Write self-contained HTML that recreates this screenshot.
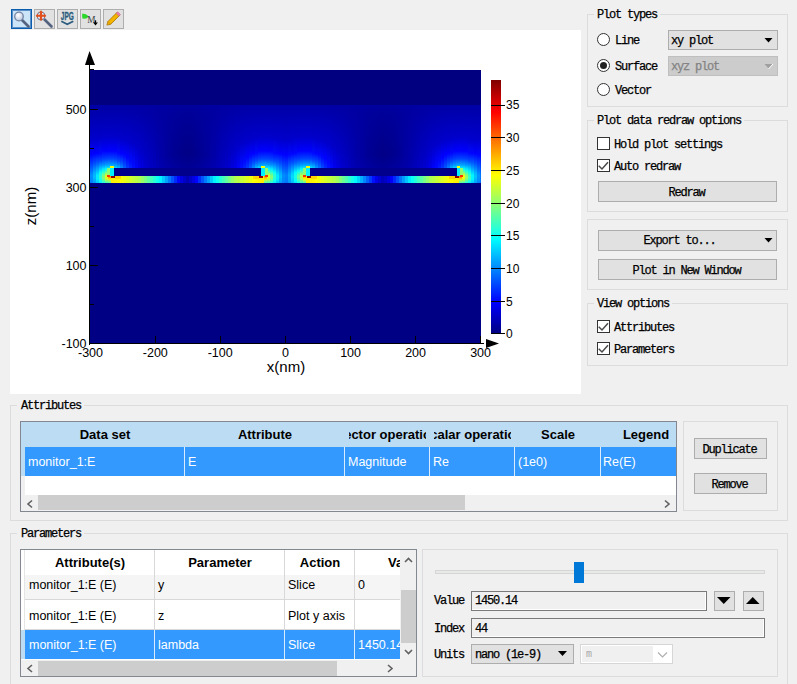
<!DOCTYPE html>
<html><head><meta charset="utf-8">
<style>
*{box-sizing:border-box;margin:0;padding:0}
html,body{width:797px;height:684px;overflow:hidden;background:#f0f0f0}
body{position:relative;font-family:"Liberation Sans",sans-serif;color:#000}
.a{position:absolute}
.mono{position:absolute;font-family:"Liberation Mono",monospace;font-size:12px;letter-spacing:-1.2px;-webkit-text-stroke:0.25px currentColor;white-space:pre;line-height:14px}
.tb{position:absolute;top:9px;width:21px;height:20px;border:1px solid #adadad;background:#e1e1e1}
.gb{position:absolute;border:1px solid #dcdcdc}
.gt{background:#f0f0f0;padding:0 3px}
.btn{position:absolute;border:1px solid #adadad;background:#e1e1e1}
.radio{position:absolute;width:13px;height:13px;border-radius:50%;border:1px solid #333;background:#fff}
.chk{position:absolute;width:13px;height:13px;border:1px solid #333;background:#fff}
.s{position:absolute;font-size:12.5px;white-space:pre;line-height:14px}
.hb{position:absolute;font-size:13px;font-weight:bold;white-space:pre;line-height:14px}
svg{position:absolute;left:0;top:0;overflow:visible}
</style></head><body>

<!-- toolbar -->
<div class="tb" style="left:11px;border:1px solid #0a5cae;box-shadow:inset 0 0 0 1px #5b8fc8;background:#cce4f7"></div>
<div class="tb" style="left:34px"></div>
<div class="tb" style="left:57px"></div>
<div class="tb" style="left:80px"></div>
<div class="tb" style="left:103px"></div>
<svg width="797" height="40" viewBox="0 0 797 40">
 <defs><radialGradient id="lens" cx="0.4" cy="0.35" r="0.7"><stop offset="0" stop-color="#ffffff"/><stop offset="1" stop-color="#b8c4dc"/></radialGradient></defs>
 <!-- magnifier -->
 <line x1="22" y1="20" x2="28.5" y2="26.5" stroke="#53627f" stroke-width="2.6" stroke-linecap="round"/>
 <circle cx="19" cy="16.5" r="4.3" fill="url(#lens)" stroke="#7584a3" stroke-width="1.3"/>
 <!-- zoom with red cross -->
 <line x1="44.5" y1="19.5" x2="51.5" y2="26.5" stroke="#53627f" stroke-width="2.6" stroke-linecap="round"/>
 <circle cx="41" cy="16" r="4" fill="#dfe4ee" stroke="#7584a3" stroke-width="1"/>
 <circle cx="41" cy="16" r="4" fill="none" stroke="#7d8fb3" stroke-width="1" stroke-dasharray="1.2 1"/>
 <path d="M41 10.3l2.2 2.4h-1.2v2h2v-1.2l2.3 2.2-2.3 2.2v-1.2h-2v2h1.2l-2.2 2.4-2.2-2.4h1.2v-2h-2v1.2l-2.3-2.2 2.3-2.2v1.2h2v-2h-1.2z" fill="#e2501e"/>
 <circle cx="41" cy="15.7" r="1.6" fill="#e2501e"/>
 <!-- JPG -->
 <text x="67.3" y="20.3" font-size="10.5" font-weight="bold" fill="#2b5c7e" stroke="#2b5c7e" stroke-width="0.35" text-anchor="middle" font-family="Liberation Sans" textLength="13" lengthAdjust="spacingAndGlyphs">JPG</text>
 <path d="M61.3 21.2l6 3 6-3" fill="none" stroke="#2b5c7e" stroke-width="1.7"/>
 <!-- M down arrow -->
 <path d="M82.3 13.6l3.6 0.7 3 2.1-2.6 2.2-3.7 0.1-0.5-2.4z" fill="#2ad82a"/>
 <text x="87.2" y="23.4" font-size="9.3" fill="#404040" font-family="Liberation Serif">M</text>
 <path d="M95.5 20.3v2.6" stroke="#000" stroke-width="1.3"/>
 <path d="M93.1 22.4h4.8l-2.4 3.2z" fill="#000"/>
 <!-- pencil -->
 <path d="M106.9 25.1l1-3.6 8.9-8.9 2.8 2.8-8.9 8.9z" fill="#f2b400" stroke="#a87400" stroke-width="0.8"/>
 <path d="M107.9 21.5l2.8 2.8" stroke="#c88a00" stroke-width="0.8"/>
 <path d="M116.1 13.3l1.6-1.6 2.8 2.8-1.6 1.6z" fill="#e77fae" stroke="#c0608a" stroke-width="0.5"/>
</svg>

<!-- plot area -->
<div class="a" style="left:10px;top:30px;width:571px;height:364px;background:#fff"></div>
<svg width="797" height="400" viewBox="0 0 797 400" font-family="Liberation Sans">
<defs><linearGradient id="c0" x2="0" y2="1"><stop offset="0.00" stop-color="#0000a6"/><stop offset="0.44" stop-color="#0000ca"/><stop offset="0.64" stop-color="#0003ff"/><stop offset="0.90" stop-color="#008dff"/><stop offset="0.97" stop-color="#0085ff"/><stop offset="1.00" stop-color="#0079ff"/></linearGradient><linearGradient id="c1" x2="0" y2="1"><stop offset="0.00" stop-color="#0000a6"/><stop offset="0.44" stop-color="#0000cc"/><stop offset="0.62" stop-color="#0000fe"/><stop offset="0.74" stop-color="#0048ff"/><stop offset="0.87" stop-color="#00acff"/><stop offset="0.92" stop-color="#00bcff"/><stop offset="1.00" stop-color="#009bff"/></linearGradient><linearGradient id="c2" x2="0" y2="1"><stop offset="0.00" stop-color="#0000a6"/><stop offset="0.44" stop-color="#0000cd"/><stop offset="0.62" stop-color="#0003ff"/><stop offset="0.74" stop-color="#0057ff"/><stop offset="0.90" stop-color="#00ebff"/><stop offset="0.95" stop-color="#00ebff"/><stop offset="1.00" stop-color="#00c1ff"/></linearGradient><linearGradient id="c3" x2="0" y2="1"><stop offset="0.00" stop-color="#0000a6"/><stop offset="0.41" stop-color="#0000c9"/><stop offset="0.62" stop-color="#0007ff"/><stop offset="0.72" stop-color="#004dff"/><stop offset="0.79" stop-color="#00a3ff"/><stop offset="0.85" stop-color="#00ecff"/><stop offset="0.87" stop-color="#11ffee"/><stop offset="0.92" stop-color="#35ffca"/><stop offset="0.97" stop-color="#11ffee"/><stop offset="1.00" stop-color="#00ecff"/></linearGradient><linearGradient id="c4" x2="0" y2="1"><stop offset="0.00" stop-color="#0000a6"/><stop offset="0.41" stop-color="#0000ca"/><stop offset="0.59" stop-color="#0000fd"/><stop offset="0.69" stop-color="#003eff"/><stop offset="0.77" stop-color="#0093ff"/><stop offset="0.82" stop-color="#00e7ff"/><stop offset="0.85" stop-color="#19ffe6"/><stop offset="0.90" stop-color="#76ff89"/><stop offset="0.92" stop-color="#88ff77"/><stop offset="0.95" stop-color="#76ff89"/><stop offset="1.00" stop-color="#19ffe6"/></linearGradient><linearGradient id="c5" x2="0" y2="1"><stop offset="0.00" stop-color="#0000a6"/><stop offset="0.41" stop-color="#0000ca"/><stop offset="0.59" stop-color="#0000ff"/><stop offset="0.69" stop-color="#0043ff"/><stop offset="0.77" stop-color="#009fff"/><stop offset="0.82" stop-color="#01fffe"/><stop offset="0.90" stop-color="#ccff33"/><stop offset="0.92" stop-color="#efff10"/><stop offset="0.95" stop-color="#ccff33"/><stop offset="1.00" stop-color="#40ffbf"/></linearGradient><linearGradient id="c6" x2="0" y2="1"><stop offset="0.00" stop-color="#0000a6"/><stop offset="0.41" stop-color="#0000cb"/><stop offset="0.59" stop-color="#0001ff"/><stop offset="0.69" stop-color="#0045ff"/><stop offset="0.77" stop-color="#00a6ff"/><stop offset="0.82" stop-color="#0ffff0"/><stop offset="0.85" stop-color="#55ffaa"/><stop offset="0.87" stop-color="#acff53"/><stop offset="0.90" stop-color="#ffea00"/><stop offset="0.92" stop-color="#ff8d00"/><stop offset="0.95" stop-color="#ffea00"/><stop offset="0.97" stop-color="#acff53"/><stop offset="1.00" stop-color="#55ffaa"/></linearGradient><linearGradient id="c7" x2="0" y2="1"><stop offset="0.00" stop-color="#0000a6"/><stop offset="0.41" stop-color="#0000ca"/><stop offset="0.59" stop-color="#0000ff"/><stop offset="0.69" stop-color="#0045ff"/><stop offset="0.77" stop-color="#00a4ff"/><stop offset="0.82" stop-color="#0bfff4"/><stop offset="0.87" stop-color="#a2ff5d"/><stop offset="0.90" stop-color="#ffff00"/><stop offset="0.92" stop-color="#ffc100"/><stop offset="0.95" stop-color="#ffff00"/><stop offset="1.00" stop-color="#50ffaf"/></linearGradient><linearGradient id="c8" x2="0" y2="1"><stop offset="0.00" stop-color="#0000a6"/><stop offset="0.41" stop-color="#0000ca"/><stop offset="0.59" stop-color="#0000fe"/><stop offset="0.69" stop-color="#0040ff"/><stop offset="0.77" stop-color="#0099ff"/><stop offset="0.82" stop-color="#00f2ff"/><stop offset="0.87" stop-color="#66ff99"/><stop offset="0.90" stop-color="#9aff65"/><stop offset="0.92" stop-color="#b1ff4e"/><stop offset="0.95" stop-color="#9aff65"/><stop offset="1.00" stop-color="#2bffd4"/></linearGradient><linearGradient id="c9" x2="0" y2="1"><stop offset="0.00" stop-color="#0000a6"/><stop offset="0.41" stop-color="#0000c9"/><stop offset="0.62" stop-color="#0007ff"/><stop offset="0.72" stop-color="#004dff"/><stop offset="0.82" stop-color="#00c8ff"/><stop offset="0.85" stop-color="#00eeff"/><stop offset="0.87" stop-color="#13ffec"/><stop offset="0.90" stop-color="#2effd1"/><stop offset="0.92" stop-color="#38ffc7"/><stop offset="0.95" stop-color="#2effd1"/><stop offset="0.97" stop-color="#13ffec"/><stop offset="1.00" stop-color="#00eeff"/></linearGradient><linearGradient id="c10" x2="0" y2="1"><stop offset="0.00" stop-color="#0000a6"/><stop offset="0.44" stop-color="#0000cc"/><stop offset="0.62" stop-color="#0000ff"/><stop offset="0.74" stop-color="#004fff"/><stop offset="0.87" stop-color="#00c1ff"/><stop offset="0.92" stop-color="#00d4ff"/><stop offset="1.00" stop-color="#00adff"/></linearGradient><linearGradient id="c11" x2="0" y2="1"><stop offset="0.00" stop-color="#0000a6"/><stop offset="0.44" stop-color="#0000c9"/><stop offset="0.64" stop-color="#0003ff"/><stop offset="0.90" stop-color="#008eff"/><stop offset="0.97" stop-color="#0086ff"/><stop offset="1.00" stop-color="#007aff"/></linearGradient><linearGradient id="c12" x2="0" y2="1"><stop offset="0.00" stop-color="#0000a5"/><stop offset="0.46" stop-color="#0000cb"/><stop offset="0.67" stop-color="#0003ff"/><stop offset="0.90" stop-color="#0060ff"/><stop offset="1.00" stop-color="#0053ff"/></linearGradient><linearGradient id="c13" x2="0" y2="1"><stop offset="0.00" stop-color="#0000a5"/><stop offset="0.49" stop-color="#0000cc"/><stop offset="0.72" stop-color="#0009ff"/><stop offset="0.90" stop-color="#003dff"/><stop offset="1.00" stop-color="#0034ff"/></linearGradient><linearGradient id="c14" x2="0" y2="1"><stop offset="0.00" stop-color="#0000a5"/><stop offset="0.49" stop-color="#0000c8"/><stop offset="0.77" stop-color="#0009ff"/><stop offset="0.92" stop-color="#0022ff"/><stop offset="1.00" stop-color="#001bff"/></linearGradient><linearGradient id="c15" x2="0" y2="1"><stop offset="0.00" stop-color="#0000a4"/><stop offset="0.51" stop-color="#0000c7"/><stop offset="0.85" stop-color="#0006ff"/><stop offset="1.00" stop-color="#0007ff"/></linearGradient><linearGradient id="c16" x2="0" y2="1"><stop offset="0.00" stop-color="#0000a4"/><stop offset="0.56" stop-color="#0000c9"/><stop offset="0.92" stop-color="#0000f9"/><stop offset="1.00" stop-color="#0000f6"/></linearGradient><linearGradient id="c17" x2="0" y2="1"><stop offset="0.00" stop-color="#0000a3"/><stop offset="0.59" stop-color="#0000c6"/><stop offset="0.95" stop-color="#0000eb"/><stop offset="1.00" stop-color="#0000e9"/></linearGradient><linearGradient id="c18" x2="0" y2="1"><stop offset="0.00" stop-color="#0000a3"/><stop offset="0.62" stop-color="#0000c3"/><stop offset="0.97" stop-color="#0000df"/><stop offset="1.00" stop-color="#0000de"/></linearGradient><linearGradient id="c19" x2="0" y2="1"><stop offset="0.00" stop-color="#0000a2"/><stop offset="0.64" stop-color="#0000bf"/><stop offset="1.00" stop-color="#0000d5"/></linearGradient><linearGradient id="c20" x2="0" y2="1"><stop offset="0.00" stop-color="#0000a2"/><stop offset="0.69" stop-color="#0000bd"/><stop offset="1.00" stop-color="#0000cd"/></linearGradient><linearGradient id="c21" x2="0" y2="1"><stop offset="0.00" stop-color="#0000a1"/><stop offset="0.69" stop-color="#0000b7"/><stop offset="1.00" stop-color="#0000c7"/></linearGradient><linearGradient id="c22" x2="0" y2="1"><stop offset="0.00" stop-color="#0000a1"/><stop offset="0.67" stop-color="#0000af"/><stop offset="1.00" stop-color="#0000c1"/></linearGradient><linearGradient id="c23" x2="0" y2="1"><stop offset="0.00" stop-color="#0000a0"/><stop offset="0.67" stop-color="#0000a9"/><stop offset="1.00" stop-color="#0000bc"/></linearGradient><linearGradient id="c24" x2="0" y2="1"><stop offset="0.00" stop-color="#0000a0"/><stop offset="0.67" stop-color="#0000a4"/><stop offset="1.00" stop-color="#0000b8"/></linearGradient><linearGradient id="c25" x2="0" y2="1"><stop offset="0.00" stop-color="#0000a0"/><stop offset="0.64" stop-color="#00009d"/><stop offset="1.00" stop-color="#0000b4"/></linearGradient><linearGradient id="c26" x2="0" y2="1"><stop offset="0.00" stop-color="#00009f"/><stop offset="0.64" stop-color="#000099"/><stop offset="1.00" stop-color="#0000b1"/></linearGradient><linearGradient id="c27" x2="0" y2="1"><stop offset="0.00" stop-color="#00009f"/><stop offset="0.64" stop-color="#000095"/><stop offset="1.00" stop-color="#0000ae"/></linearGradient><linearGradient id="c28" x2="0" y2="1"><stop offset="0.00" stop-color="#00009e"/><stop offset="0.64" stop-color="#000091"/><stop offset="1.00" stop-color="#0000ab"/></linearGradient><linearGradient id="c29" x2="0" y2="1"><stop offset="0.00" stop-color="#00009e"/><stop offset="0.64" stop-color="#00008e"/><stop offset="1.00" stop-color="#0000a9"/></linearGradient><linearGradient id="c30" x2="0" y2="1"><stop offset="0.00" stop-color="#00009d"/><stop offset="0.62" stop-color="#00008a"/><stop offset="1.00" stop-color="#0000a7"/></linearGradient><linearGradient id="c31" x2="0" y2="1"><stop offset="0.00" stop-color="#00009d"/><stop offset="0.62" stop-color="#000088"/><stop offset="1.00" stop-color="#0000a5"/></linearGradient><linearGradient id="c32" x2="0" y2="1"><stop offset="0.00" stop-color="#00009d"/><stop offset="0.62" stop-color="#000087"/><stop offset="1.00" stop-color="#0000a4"/></linearGradient><linearGradient id="c33" x2="0" y2="1"><stop offset="0.00" stop-color="#00009d"/><stop offset="0.62" stop-color="#000088"/><stop offset="1.00" stop-color="#0000a5"/></linearGradient><linearGradient id="c34" x2="0" y2="1"><stop offset="0.00" stop-color="#00009d"/><stop offset="0.62" stop-color="#00008a"/><stop offset="1.00" stop-color="#0000a7"/></linearGradient><linearGradient id="c35" x2="0" y2="1"><stop offset="0.00" stop-color="#00009e"/><stop offset="0.64" stop-color="#00008e"/><stop offset="1.00" stop-color="#0000a9"/></linearGradient><linearGradient id="c36" x2="0" y2="1"><stop offset="0.00" stop-color="#00009e"/><stop offset="0.64" stop-color="#000091"/><stop offset="1.00" stop-color="#0000ab"/></linearGradient><linearGradient id="c37" x2="0" y2="1"><stop offset="0.00" stop-color="#00009f"/><stop offset="0.64" stop-color="#000095"/><stop offset="1.00" stop-color="#0000ae"/></linearGradient><linearGradient id="c38" x2="0" y2="1"><stop offset="0.00" stop-color="#00009f"/><stop offset="0.64" stop-color="#000099"/><stop offset="1.00" stop-color="#0000b1"/></linearGradient><linearGradient id="c39" x2="0" y2="1"><stop offset="0.00" stop-color="#0000a0"/><stop offset="0.64" stop-color="#00009d"/><stop offset="1.00" stop-color="#0000b4"/></linearGradient><linearGradient id="c40" x2="0" y2="1"><stop offset="0.00" stop-color="#0000a0"/><stop offset="0.67" stop-color="#0000a4"/><stop offset="1.00" stop-color="#0000b8"/></linearGradient><linearGradient id="c41" x2="0" y2="1"><stop offset="0.00" stop-color="#0000a0"/><stop offset="0.67" stop-color="#0000a9"/><stop offset="1.00" stop-color="#0000bc"/></linearGradient><linearGradient id="c42" x2="0" y2="1"><stop offset="0.00" stop-color="#0000a1"/><stop offset="0.67" stop-color="#0000af"/><stop offset="1.00" stop-color="#0000c1"/></linearGradient><linearGradient id="c43" x2="0" y2="1"><stop offset="0.00" stop-color="#0000a1"/><stop offset="0.69" stop-color="#0000b7"/><stop offset="1.00" stop-color="#0000c7"/></linearGradient><linearGradient id="c44" x2="0" y2="1"><stop offset="0.00" stop-color="#0000a2"/><stop offset="0.69" stop-color="#0000bd"/><stop offset="1.00" stop-color="#0000cd"/></linearGradient><linearGradient id="c45" x2="0" y2="1"><stop offset="0.00" stop-color="#0000a2"/><stop offset="0.64" stop-color="#0000bf"/><stop offset="1.00" stop-color="#0000d5"/></linearGradient><linearGradient id="c46" x2="0" y2="1"><stop offset="0.00" stop-color="#0000a3"/><stop offset="0.62" stop-color="#0000c3"/><stop offset="0.97" stop-color="#0000df"/><stop offset="1.00" stop-color="#0000de"/></linearGradient><linearGradient id="c47" x2="0" y2="1"><stop offset="0.00" stop-color="#0000a3"/><stop offset="0.59" stop-color="#0000c6"/><stop offset="0.95" stop-color="#0000eb"/><stop offset="1.00" stop-color="#0000e9"/></linearGradient><linearGradient id="c48" x2="0" y2="1"><stop offset="0.00" stop-color="#0000a4"/><stop offset="0.56" stop-color="#0000c9"/><stop offset="0.92" stop-color="#0000f9"/><stop offset="1.00" stop-color="#0000f6"/></linearGradient><linearGradient id="c49" x2="0" y2="1"><stop offset="0.00" stop-color="#0000a4"/><stop offset="0.51" stop-color="#0000c7"/><stop offset="0.85" stop-color="#0006ff"/><stop offset="1.00" stop-color="#0007ff"/></linearGradient><linearGradient id="c50" x2="0" y2="1"><stop offset="0.00" stop-color="#0000a5"/><stop offset="0.49" stop-color="#0000c8"/><stop offset="0.77" stop-color="#0009ff"/><stop offset="0.92" stop-color="#0022ff"/><stop offset="1.00" stop-color="#001bff"/></linearGradient><linearGradient id="c51" x2="0" y2="1"><stop offset="0.00" stop-color="#0000a5"/><stop offset="0.49" stop-color="#0000cc"/><stop offset="0.72" stop-color="#0009ff"/><stop offset="0.90" stop-color="#003dff"/><stop offset="1.00" stop-color="#0034ff"/></linearGradient><linearGradient id="c52" x2="0" y2="1"><stop offset="0.00" stop-color="#0000a5"/><stop offset="0.46" stop-color="#0000cb"/><stop offset="0.67" stop-color="#0003ff"/><stop offset="0.90" stop-color="#0060ff"/><stop offset="1.00" stop-color="#0053ff"/></linearGradient><linearGradient id="c53" x2="0" y2="1"><stop offset="0.00" stop-color="#0000a6"/><stop offset="0.44" stop-color="#0000c9"/><stop offset="0.64" stop-color="#0003ff"/><stop offset="0.90" stop-color="#008eff"/><stop offset="0.97" stop-color="#0086ff"/><stop offset="1.00" stop-color="#007aff"/></linearGradient><linearGradient id="c54" x2="0" y2="1"><stop offset="0.00" stop-color="#0000a6"/><stop offset="0.44" stop-color="#0000cc"/><stop offset="0.62" stop-color="#0000ff"/><stop offset="0.74" stop-color="#004fff"/><stop offset="0.87" stop-color="#00c1ff"/><stop offset="0.92" stop-color="#00d4ff"/><stop offset="1.00" stop-color="#00adff"/></linearGradient><linearGradient id="c55" x2="0" y2="1"><stop offset="0.00" stop-color="#0000a6"/><stop offset="0.41" stop-color="#0000c9"/><stop offset="0.62" stop-color="#0007ff"/><stop offset="0.72" stop-color="#004dff"/><stop offset="0.82" stop-color="#00c8ff"/><stop offset="0.85" stop-color="#00eeff"/><stop offset="0.87" stop-color="#13ffec"/><stop offset="0.90" stop-color="#2effd1"/><stop offset="0.92" stop-color="#38ffc7"/><stop offset="0.95" stop-color="#2effd1"/><stop offset="0.97" stop-color="#13ffec"/><stop offset="1.00" stop-color="#00eeff"/></linearGradient><linearGradient id="c56" x2="0" y2="1"><stop offset="0.00" stop-color="#0000a6"/><stop offset="0.41" stop-color="#0000ca"/><stop offset="0.59" stop-color="#0000fe"/><stop offset="0.69" stop-color="#0040ff"/><stop offset="0.77" stop-color="#0099ff"/><stop offset="0.82" stop-color="#00f2ff"/><stop offset="0.87" stop-color="#66ff99"/><stop offset="0.90" stop-color="#9aff65"/><stop offset="0.92" stop-color="#b1ff4e"/><stop offset="0.95" stop-color="#9aff65"/><stop offset="1.00" stop-color="#2bffd4"/></linearGradient><linearGradient id="c57" x2="0" y2="1"><stop offset="0.00" stop-color="#0000a6"/><stop offset="0.41" stop-color="#0000ca"/><stop offset="0.59" stop-color="#0000ff"/><stop offset="0.69" stop-color="#0045ff"/><stop offset="0.77" stop-color="#00a4ff"/><stop offset="0.82" stop-color="#0bfff4"/><stop offset="0.87" stop-color="#a2ff5d"/><stop offset="0.90" stop-color="#ffff00"/><stop offset="0.92" stop-color="#ffc100"/><stop offset="0.95" stop-color="#ffff00"/><stop offset="1.00" stop-color="#50ffaf"/></linearGradient><linearGradient id="c58" x2="0" y2="1"><stop offset="0.00" stop-color="#0000a6"/><stop offset="0.41" stop-color="#0000cb"/><stop offset="0.59" stop-color="#0001ff"/><stop offset="0.69" stop-color="#0045ff"/><stop offset="0.77" stop-color="#00a6ff"/><stop offset="0.82" stop-color="#0ffff0"/><stop offset="0.85" stop-color="#55ffaa"/><stop offset="0.87" stop-color="#acff53"/><stop offset="0.90" stop-color="#ffea00"/><stop offset="0.92" stop-color="#ff8d00"/><stop offset="0.95" stop-color="#ffea00"/><stop offset="0.97" stop-color="#acff53"/><stop offset="1.00" stop-color="#55ffaa"/></linearGradient><linearGradient id="c59" x2="0" y2="1"><stop offset="0.00" stop-color="#0000a6"/><stop offset="0.41" stop-color="#0000ca"/><stop offset="0.59" stop-color="#0000ff"/><stop offset="0.69" stop-color="#0043ff"/><stop offset="0.77" stop-color="#009fff"/><stop offset="0.82" stop-color="#01fffe"/><stop offset="0.90" stop-color="#ccff33"/><stop offset="0.92" stop-color="#efff10"/><stop offset="0.95" stop-color="#ccff33"/><stop offset="1.00" stop-color="#40ffbf"/></linearGradient><linearGradient id="c60" x2="0" y2="1"><stop offset="0.00" stop-color="#0000a6"/><stop offset="0.41" stop-color="#0000ca"/><stop offset="0.59" stop-color="#0000fd"/><stop offset="0.69" stop-color="#003eff"/><stop offset="0.77" stop-color="#0093ff"/><stop offset="0.82" stop-color="#00e7ff"/><stop offset="0.85" stop-color="#19ffe6"/><stop offset="0.90" stop-color="#76ff89"/><stop offset="0.92" stop-color="#88ff77"/><stop offset="0.95" stop-color="#76ff89"/><stop offset="1.00" stop-color="#19ffe6"/></linearGradient><linearGradient id="c61" x2="0" y2="1"><stop offset="0.00" stop-color="#0000a6"/><stop offset="0.41" stop-color="#0000c9"/><stop offset="0.62" stop-color="#0007ff"/><stop offset="0.72" stop-color="#004dff"/><stop offset="0.79" stop-color="#00a3ff"/><stop offset="0.85" stop-color="#00ecff"/><stop offset="0.87" stop-color="#11ffee"/><stop offset="0.92" stop-color="#35ffca"/><stop offset="0.97" stop-color="#11ffee"/><stop offset="1.00" stop-color="#00ecff"/></linearGradient><linearGradient id="c62" x2="0" y2="1"><stop offset="0.00" stop-color="#0000a6"/><stop offset="0.44" stop-color="#0000cd"/><stop offset="0.62" stop-color="#0003ff"/><stop offset="0.74" stop-color="#0057ff"/><stop offset="0.90" stop-color="#00ebff"/><stop offset="0.95" stop-color="#00ebff"/><stop offset="1.00" stop-color="#00c1ff"/></linearGradient><linearGradient id="c63" x2="0" y2="1"><stop offset="0.00" stop-color="#0000a6"/><stop offset="0.44" stop-color="#0000cc"/><stop offset="0.62" stop-color="#0000fe"/><stop offset="0.74" stop-color="#0048ff"/><stop offset="0.87" stop-color="#00acff"/><stop offset="0.92" stop-color="#00bcff"/><stop offset="1.00" stop-color="#009bff"/></linearGradient><linearGradient id="c64" x2="0" y2="1"><stop offset="0.00" stop-color="#0000a6"/><stop offset="0.44" stop-color="#0000ca"/><stop offset="0.64" stop-color="#0003ff"/><stop offset="0.90" stop-color="#008dff"/><stop offset="0.97" stop-color="#0085ff"/><stop offset="1.00" stop-color="#0079ff"/></linearGradient><linearGradient id="c65" x2="0" y2="1"><stop offset="0.00" stop-color="#0000a6"/><stop offset="0.44" stop-color="#0000ca"/><stop offset="0.64" stop-color="#0001ff"/><stop offset="0.90" stop-color="#0081ff"/><stop offset="0.97" stop-color="#0079ff"/><stop offset="1.00" stop-color="#006eff"/></linearGradient><linearGradient id="c66" x2="0" y2="1"><stop offset="0.00" stop-color="#0000a6"/><stop offset="0.44" stop-color="#0000cb"/><stop offset="0.64" stop-color="#0008ff"/><stop offset="0.82" stop-color="#007cff"/><stop offset="0.90" stop-color="#00a8ff"/><stop offset="0.97" stop-color="#009eff"/><stop offset="1.00" stop-color="#008fff"/></linearGradient><linearGradient id="c67" x2="0" y2="1"><stop offset="0.00" stop-color="#0000a6"/><stop offset="0.44" stop-color="#0000cd"/><stop offset="0.62" stop-color="#0002ff"/><stop offset="0.74" stop-color="#0052ff"/><stop offset="0.87" stop-color="#00caff"/><stop offset="0.92" stop-color="#00deff"/><stop offset="0.97" stop-color="#00caff"/><stop offset="1.00" stop-color="#00b4ff"/></linearGradient><linearGradient id="c68" x2="0" y2="1"><stop offset="0.00" stop-color="#0000a6"/><stop offset="0.41" stop-color="#0000c9"/><stop offset="0.62" stop-color="#0006ff"/><stop offset="0.74" stop-color="#0061ff"/><stop offset="0.87" stop-color="#00fdff"/><stop offset="0.92" stop-color="#1dffe2"/><stop offset="0.97" stop-color="#00fdff"/><stop offset="1.00" stop-color="#00deff"/></linearGradient><linearGradient id="c69" x2="0" y2="1"><stop offset="0.00" stop-color="#0000a6"/><stop offset="0.41" stop-color="#0000ca"/><stop offset="0.59" stop-color="#0000fd"/><stop offset="0.69" stop-color="#003cff"/><stop offset="0.77" stop-color="#008eff"/><stop offset="0.85" stop-color="#0bfff4"/><stop offset="0.90" stop-color="#5cffa3"/><stop offset="0.92" stop-color="#6aff95"/><stop offset="0.95" stop-color="#5cffa3"/><stop offset="1.00" stop-color="#0bfff4"/></linearGradient><linearGradient id="c70" x2="0" y2="1"><stop offset="0.00" stop-color="#0000a6"/><stop offset="0.41" stop-color="#0000ca"/><stop offset="0.59" stop-color="#0000ff"/><stop offset="0.69" stop-color="#0042ff"/><stop offset="0.77" stop-color="#009cff"/><stop offset="0.82" stop-color="#00f9ff"/><stop offset="0.90" stop-color="#afff50"/><stop offset="0.92" stop-color="#caff35"/><stop offset="0.95" stop-color="#afff50"/><stop offset="1.00" stop-color="#34ffcb"/></linearGradient><linearGradient id="c71" x2="0" y2="1"><stop offset="0.00" stop-color="#0000a6"/><stop offset="0.41" stop-color="#0000cb"/><stop offset="0.59" stop-color="#0001ff"/><stop offset="0.69" stop-color="#0045ff"/><stop offset="0.77" stop-color="#00a4ff"/><stop offset="0.82" stop-color="#0cfff3"/><stop offset="0.87" stop-color="#a3ff5c"/><stop offset="0.90" stop-color="#fffc00"/><stop offset="0.92" stop-color="#ffbc00"/><stop offset="0.95" stop-color="#fffc00"/><stop offset="1.00" stop-color="#51ffae"/></linearGradient><linearGradient id="c72" x2="0" y2="1"><stop offset="0.00" stop-color="#0000a6"/><stop offset="0.41" stop-color="#0000cb"/><stop offset="0.59" stop-color="#0001ff"/><stop offset="0.69" stop-color="#0045ff"/><stop offset="0.77" stop-color="#00a5ff"/><stop offset="0.82" stop-color="#0ffff0"/><stop offset="0.87" stop-color="#abff54"/><stop offset="0.90" stop-color="#ffea00"/><stop offset="0.92" stop-color="#ff8e00"/><stop offset="0.95" stop-color="#ffea00"/><stop offset="0.97" stop-color="#abff54"/><stop offset="1.00" stop-color="#55ffaa"/></linearGradient><linearGradient id="c73" x2="0" y2="1"><stop offset="0.00" stop-color="#0000a6"/><stop offset="0.41" stop-color="#0000ca"/><stop offset="0.59" stop-color="#0000ff"/><stop offset="0.69" stop-color="#0042ff"/><stop offset="0.77" stop-color="#009eff"/><stop offset="0.82" stop-color="#00fdff"/><stop offset="0.90" stop-color="#bfff40"/><stop offset="0.92" stop-color="#deff21"/><stop offset="0.95" stop-color="#bfff40"/><stop offset="1.00" stop-color="#3affc5"/></linearGradient><linearGradient id="c74" x2="0" y2="1"><stop offset="0.00" stop-color="#0000a6"/><stop offset="0.41" stop-color="#0000c9"/><stop offset="0.62" stop-color="#0009ff"/><stop offset="0.72" stop-color="#0052ff"/><stop offset="0.79" stop-color="#00afff"/><stop offset="0.85" stop-color="#04fffb"/><stop offset="0.90" stop-color="#51ffae"/><stop offset="0.92" stop-color="#5effa1"/><stop offset="0.95" stop-color="#51ffae"/><stop offset="1.00" stop-color="#05fffa"/></linearGradient><linearGradient id="c75" x2="0" y2="1"><stop offset="0.00" stop-color="#0000a6"/><stop offset="0.44" stop-color="#0000cc"/><stop offset="0.62" stop-color="#0003ff"/><stop offset="0.74" stop-color="#0057ff"/><stop offset="0.90" stop-color="#00ecff"/><stop offset="0.95" stop-color="#00edff"/><stop offset="1.00" stop-color="#00c2ff"/></linearGradient><linearGradient id="c76" x2="0" y2="1"><stop offset="0.00" stop-color="#0000a6"/><stop offset="0.44" stop-color="#0000ca"/><stop offset="0.64" stop-color="#0006ff"/><stop offset="0.79" stop-color="#0064ff"/><stop offset="0.90" stop-color="#00a0ff"/><stop offset="0.97" stop-color="#0097ff"/><stop offset="1.00" stop-color="#0088ff"/></linearGradient><linearGradient id="c77" x2="0" y2="1"><stop offset="0.00" stop-color="#0000a5"/><stop offset="0.46" stop-color="#0000cc"/><stop offset="0.67" stop-color="#0006ff"/><stop offset="0.87" stop-color="#0068ff"/><stop offset="0.97" stop-color="#0068ff"/><stop offset="1.00" stop-color="#005fff"/></linearGradient><linearGradient id="c78" x2="0" y2="1"><stop offset="0.00" stop-color="#0000a5"/><stop offset="0.46" stop-color="#0000c9"/><stop offset="0.69" stop-color="#0004ff"/><stop offset="0.90" stop-color="#0048ff"/><stop offset="1.00" stop-color="#003eff"/></linearGradient><linearGradient id="c79" x2="0" y2="1"><stop offset="0.00" stop-color="#0000a5"/><stop offset="0.51" stop-color="#0000cd"/><stop offset="0.74" stop-color="#0007ff"/><stop offset="0.92" stop-color="#002bff"/><stop offset="1.00" stop-color="#0023ff"/></linearGradient><linearGradient id="c80" x2="0" y2="1"><stop offset="0.00" stop-color="#0000a4"/><stop offset="0.54" stop-color="#0000cc"/><stop offset="0.82" stop-color="#0008ff"/><stop offset="1.00" stop-color="#000eff"/></linearGradient><linearGradient id="c81" x2="0" y2="1"><stop offset="0.00" stop-color="#0000a4"/><stop offset="0.54" stop-color="#0000c7"/><stop offset="0.92" stop-color="#0000ff"/><stop offset="1.00" stop-color="#0000fb"/></linearGradient><linearGradient id="c82" x2="0" y2="1"><stop offset="0.00" stop-color="#0000a4"/><stop offset="0.56" stop-color="#0000c5"/><stop offset="0.92" stop-color="#0000f0"/><stop offset="1.00" stop-color="#0000ed"/></linearGradient><linearGradient id="c83" x2="0" y2="1"><stop offset="0.00" stop-color="#0000a3"/><stop offset="0.62" stop-color="#0000c5"/><stop offset="0.97" stop-color="#0000e3"/><stop offset="1.00" stop-color="#0000e2"/></linearGradient><linearGradient id="c84" x2="0" y2="1"><stop offset="0.00" stop-color="#0000a3"/><stop offset="0.64" stop-color="#0000c1"/><stop offset="1.00" stop-color="#0000d8"/></linearGradient><linearGradient id="c85" x2="0" y2="1"><stop offset="0.00" stop-color="#0000a2"/><stop offset="0.67" stop-color="#0000bd"/><stop offset="1.00" stop-color="#0000d0"/></linearGradient><linearGradient id="c86" x2="0" y2="1"><stop offset="0.00" stop-color="#0000a2"/><stop offset="0.67" stop-color="#0000b7"/><stop offset="1.00" stop-color="#0000c9"/></linearGradient><linearGradient id="c87" x2="0" y2="1"><stop offset="0.00" stop-color="#0000a1"/><stop offset="0.67" stop-color="#0000b1"/><stop offset="1.00" stop-color="#0000c3"/></linearGradient><linearGradient id="c88" x2="0" y2="1"><stop offset="0.00" stop-color="#0000a1"/><stop offset="0.67" stop-color="#0000ab"/><stop offset="1.00" stop-color="#0000be"/></linearGradient><linearGradient id="c89" x2="0" y2="1"><stop offset="0.00" stop-color="#0000a0"/><stop offset="0.67" stop-color="#0000a6"/><stop offset="1.00" stop-color="#0000b9"/></linearGradient><linearGradient id="c90" x2="0" y2="1"><stop offset="0.00" stop-color="#0000a0"/><stop offset="0.67" stop-color="#0000a1"/><stop offset="1.00" stop-color="#0000b5"/></linearGradient><linearGradient id="c91" x2="0" y2="1"><stop offset="0.00" stop-color="#00009f"/><stop offset="0.67" stop-color="#00009c"/><stop offset="1.00" stop-color="#0000b2"/></linearGradient><linearGradient id="c92" x2="0" y2="1"><stop offset="0.00" stop-color="#00009f"/><stop offset="0.64" stop-color="#000096"/><stop offset="1.00" stop-color="#0000af"/></linearGradient><linearGradient id="c93" x2="0" y2="1"><stop offset="0.00" stop-color="#00009e"/><stop offset="0.64" stop-color="#000092"/><stop offset="1.00" stop-color="#0000ac"/></linearGradient><linearGradient id="c94" x2="0" y2="1"><stop offset="0.00" stop-color="#00009e"/><stop offset="0.64" stop-color="#00008f"/><stop offset="1.00" stop-color="#0000aa"/></linearGradient><linearGradient id="c95" x2="0" y2="1"><stop offset="0.00" stop-color="#00009e"/><stop offset="0.64" stop-color="#00008c"/><stop offset="1.00" stop-color="#0000a8"/></linearGradient><linearGradient id="c96" x2="0" y2="1"><stop offset="0.00" stop-color="#00009d"/><stop offset="0.64" stop-color="#00008a"/><stop offset="1.00" stop-color="#0000a6"/></linearGradient><linearGradient id="c97" x2="0" y2="1"><stop offset="0.00" stop-color="#00009d"/><stop offset="0.62" stop-color="#000087"/><stop offset="1.00" stop-color="#0000a4"/></linearGradient><linearGradient id="c98" x2="0" y2="1"><stop offset="0.00" stop-color="#00009d"/><stop offset="0.64" stop-color="#000089"/><stop offset="1.00" stop-color="#0000a5"/></linearGradient><linearGradient id="c99" x2="0" y2="1"><stop offset="0.00" stop-color="#00009d"/><stop offset="0.64" stop-color="#00008b"/><stop offset="1.00" stop-color="#0000a7"/></linearGradient><linearGradient id="c100" x2="0" y2="1"><stop offset="0.00" stop-color="#00009e"/><stop offset="0.62" stop-color="#00008c"/><stop offset="1.00" stop-color="#0000a9"/></linearGradient><linearGradient id="c101" x2="0" y2="1"><stop offset="0.00" stop-color="#00009e"/><stop offset="0.62" stop-color="#00008f"/><stop offset="1.00" stop-color="#0000ab"/></linearGradient><linearGradient id="c102" x2="0" y2="1"><stop offset="0.00" stop-color="#00009f"/><stop offset="0.64" stop-color="#000094"/><stop offset="1.00" stop-color="#0000ad"/></linearGradient><linearGradient id="c103" x2="0" y2="1"><stop offset="0.00" stop-color="#00009f"/><stop offset="0.64" stop-color="#000098"/><stop offset="1.00" stop-color="#0000b0"/></linearGradient><linearGradient id="c104" x2="0" y2="1"><stop offset="0.00" stop-color="#00009f"/><stop offset="0.67" stop-color="#00009e"/><stop offset="1.00" stop-color="#0000b3"/></linearGradient><linearGradient id="c105" x2="0" y2="1"><stop offset="0.00" stop-color="#0000a0"/><stop offset="0.67" stop-color="#0000a3"/><stop offset="1.00" stop-color="#0000b7"/></linearGradient><linearGradient id="c106" x2="0" y2="1"><stop offset="0.00" stop-color="#0000a0"/><stop offset="0.67" stop-color="#0000a8"/><stop offset="1.00" stop-color="#0000bb"/></linearGradient><linearGradient id="c107" x2="0" y2="1"><stop offset="0.00" stop-color="#0000a1"/><stop offset="0.67" stop-color="#0000ae"/><stop offset="1.00" stop-color="#0000c0"/></linearGradient><linearGradient id="c108" x2="0" y2="1"><stop offset="0.00" stop-color="#0000a1"/><stop offset="0.67" stop-color="#0000b4"/><stop offset="1.00" stop-color="#0000c6"/></linearGradient><linearGradient id="c109" x2="0" y2="1"><stop offset="0.00" stop-color="#0000a2"/><stop offset="0.67" stop-color="#0000ba"/><stop offset="1.00" stop-color="#0000cc"/></linearGradient><linearGradient id="c110" x2="0" y2="1"><stop offset="0.00" stop-color="#0000a2"/><stop offset="0.67" stop-color="#0000c0"/><stop offset="1.00" stop-color="#0000d4"/></linearGradient><linearGradient id="c111" x2="0" y2="1"><stop offset="0.00" stop-color="#0000a3"/><stop offset="0.62" stop-color="#0000c1"/><stop offset="0.97" stop-color="#0000dd"/><stop offset="1.00" stop-color="#0000dc"/></linearGradient><linearGradient id="c112" x2="0" y2="1"><stop offset="0.00" stop-color="#0000a3"/><stop offset="0.59" stop-color="#0000c5"/><stop offset="0.95" stop-color="#0000e9"/><stop offset="1.00" stop-color="#0000e7"/></linearGradient><linearGradient id="c113" x2="0" y2="1"><stop offset="0.00" stop-color="#0000a4"/><stop offset="0.56" stop-color="#0000c8"/><stop offset="0.92" stop-color="#0000f7"/><stop offset="1.00" stop-color="#0000f4"/></linearGradient><linearGradient id="c114" x2="0" y2="1"><stop offset="0.00" stop-color="#0000a4"/><stop offset="0.54" stop-color="#0000ca"/><stop offset="0.85" stop-color="#0003ff"/><stop offset="1.00" stop-color="#0005ff"/></linearGradient><linearGradient id="c115" x2="0" y2="1"><stop offset="0.00" stop-color="#0000a5"/><stop offset="0.51" stop-color="#0000cb"/><stop offset="0.77" stop-color="#0006ff"/><stop offset="0.95" stop-color="#001dff"/><stop offset="1.00" stop-color="#0018ff"/></linearGradient><linearGradient id="c116" x2="0" y2="1"><stop offset="0.00" stop-color="#0000a5"/><stop offset="0.49" stop-color="#0000cb"/><stop offset="0.72" stop-color="#0006ff"/><stop offset="0.90" stop-color="#0038ff"/><stop offset="1.00" stop-color="#0030ff"/></linearGradient><linearGradient id="c117" x2="0" y2="1"><stop offset="0.00" stop-color="#0000a5"/><stop offset="0.46" stop-color="#0000ca"/><stop offset="0.67" stop-color="#0001ff"/><stop offset="0.90" stop-color="#005aff"/><stop offset="1.00" stop-color="#004dff"/></linearGradient><linearGradient id="c118" x2="0" y2="1"><stop offset="0.00" stop-color="#0000a6"/><stop offset="0.46" stop-color="#0000cd"/><stop offset="0.64" stop-color="#0001ff"/><stop offset="0.90" stop-color="#0086ff"/><stop offset="0.97" stop-color="#007eff"/><stop offset="1.00" stop-color="#0073ff"/></linearGradient><linearGradient id="c119" x2="0" y2="1"><stop offset="0.00" stop-color="#0000a6"/><stop offset="0.44" stop-color="#0000cb"/><stop offset="0.62" stop-color="#0000fe"/><stop offset="0.74" stop-color="#004bff"/><stop offset="0.87" stop-color="#00b5ff"/><stop offset="0.92" stop-color="#00c6ff"/><stop offset="1.00" stop-color="#00a2ff"/></linearGradient><linearGradient id="c120" x2="0" y2="1"><stop offset="0.00" stop-color="#0000a6"/><stop offset="0.44" stop-color="#0000cd"/><stop offset="0.62" stop-color="#0006ff"/><stop offset="0.72" stop-color="#004aff"/><stop offset="0.82" stop-color="#00c0ff"/><stop offset="0.87" stop-color="#05fffa"/><stop offset="0.92" stop-color="#26ffd9"/><stop offset="0.97" stop-color="#05fffa"/><stop offset="1.00" stop-color="#00e3ff"/></linearGradient><linearGradient id="c121" x2="0" y2="1"><stop offset="0.00" stop-color="#0000a6"/><stop offset="0.41" stop-color="#0000ca"/><stop offset="0.59" stop-color="#0000fd"/><stop offset="0.69" stop-color="#003fff"/><stop offset="0.77" stop-color="#0096ff"/><stop offset="0.82" stop-color="#00ecff"/><stop offset="0.85" stop-color="#22ffdd"/><stop offset="0.90" stop-color="#87ff78"/><stop offset="0.92" stop-color="#9bff64"/><stop offset="0.95" stop-color="#87ff78"/><stop offset="1.00" stop-color="#22ffdd"/></linearGradient><linearGradient id="c122" x2="0" y2="1"><stop offset="0.00" stop-color="#0000a6"/><stop offset="0.41" stop-color="#0000ca"/><stop offset="0.59" stop-color="#0000ff"/><stop offset="0.69" stop-color="#0044ff"/><stop offset="0.77" stop-color="#00a3ff"/><stop offset="0.82" stop-color="#09fff6"/><stop offset="0.87" stop-color="#9bff64"/><stop offset="0.90" stop-color="#f1ff0e"/><stop offset="0.92" stop-color="#ffd900"/><stop offset="0.95" stop-color="#f1ff0e"/><stop offset="1.00" stop-color="#4cffb3"/></linearGradient><linearGradient id="c123" x2="0" y2="1"><stop offset="0.00" stop-color="#0000a6"/><stop offset="0.41" stop-color="#0000cb"/><stop offset="0.59" stop-color="#0001ff"/><stop offset="0.69" stop-color="#0046ff"/><stop offset="0.77" stop-color="#00a6ff"/><stop offset="0.82" stop-color="#0ffff0"/><stop offset="0.85" stop-color="#56ffa9"/><stop offset="0.87" stop-color="#aeff51"/><stop offset="0.90" stop-color="#ffe400"/><stop offset="0.92" stop-color="#ff7400"/><stop offset="0.95" stop-color="#ffe400"/><stop offset="0.97" stop-color="#aeff51"/><stop offset="1.00" stop-color="#56ffa9"/></linearGradient><linearGradient id="c124" x2="0" y2="1"><stop offset="0.00" stop-color="#0000a6"/><stop offset="0.41" stop-color="#0000cb"/><stop offset="0.59" stop-color="#0000ff"/><stop offset="0.69" stop-color="#0044ff"/><stop offset="0.77" stop-color="#00a1ff"/><stop offset="0.82" stop-color="#04fffb"/><stop offset="0.90" stop-color="#dbff24"/><stop offset="0.92" stop-color="#fffb00"/><stop offset="0.95" stop-color="#dbff24"/><stop offset="1.00" stop-color="#45ffba"/></linearGradient><linearGradient id="c125" x2="0" y2="1"><stop offset="0.00" stop-color="#0000a6"/><stop offset="0.41" stop-color="#0000ca"/><stop offset="0.59" stop-color="#0000fe"/><stop offset="0.69" stop-color="#003fff"/><stop offset="0.77" stop-color="#0096ff"/><stop offset="0.82" stop-color="#00ebff"/><stop offset="0.85" stop-color="#20ffdf"/><stop offset="0.90" stop-color="#84ff7b"/><stop offset="0.92" stop-color="#97ff68"/><stop offset="0.95" stop-color="#84ff7b"/><stop offset="1.00" stop-color="#20ffdf"/></linearGradient><linearGradient id="c126" x2="0" y2="1"><stop offset="0.00" stop-color="#0000a6"/><stop offset="0.44" stop-color="#0000ce"/><stop offset="0.62" stop-color="#0008ff"/><stop offset="0.72" stop-color="#004eff"/><stop offset="0.79" stop-color="#00a7ff"/><stop offset="0.85" stop-color="#00f4ff"/><stop offset="0.90" stop-color="#37ffc8"/><stop offset="0.92" stop-color="#42ffbd"/><stop offset="0.95" stop-color="#37ffc8"/><stop offset="1.00" stop-color="#00f4ff"/></linearGradient><linearGradient id="c127" x2="0" y2="1"><stop offset="0.00" stop-color="#0000a6"/><stop offset="0.44" stop-color="#0000cd"/><stop offset="0.62" stop-color="#0004ff"/><stop offset="0.74" stop-color="#005aff"/><stop offset="0.90" stop-color="#00f5ff"/><stop offset="0.95" stop-color="#00f5ff"/><stop offset="1.00" stop-color="#00c8ff"/></linearGradient><linearGradient id="c128" x2="0" y2="1"><stop offset="0.00" stop-color="#0000a6"/><stop offset="0.44" stop-color="#0000cc"/><stop offset="0.62" stop-color="#0000fe"/><stop offset="0.74" stop-color="#004aff"/><stop offset="0.87" stop-color="#00b3ff"/><stop offset="0.92" stop-color="#00c4ff"/><stop offset="1.00" stop-color="#00a1ff"/></linearGradient><linearGradient id="c129" x2="0" y2="1"><stop offset="0.00" stop-color="#0000a6"/><stop offset="0.44" stop-color="#0000cb"/><stop offset="0.64" stop-color="#0005ff"/><stop offset="0.90" stop-color="#0094ff"/><stop offset="0.97" stop-color="#008bff"/><stop offset="1.00" stop-color="#007eff"/></linearGradient><linearGradient id="c130" x2="0" y2="1"><stop offset="0.00" stop-color="#0000a5"/><stop offset="0.44" stop-color="#0000ca"/><stop offset="0.64" stop-color="#0000ff"/><stop offset="0.90" stop-color="#007bff"/><stop offset="0.97" stop-color="#0074ff"/><stop offset="1.00" stop-color="#0069ff"/></linearGradient></defs><rect x="90" y="70" width="391" height="35" fill="#000080"/>
<rect x="90" y="183" width="391" height="161" fill="#000085"/>
<rect x="90" y="105" width="3" height="78" fill="url(#c0)"/>
<rect x="93" y="105" width="3" height="78" fill="url(#c1)"/>
<rect x="96" y="105" width="3" height="78" fill="url(#c2)"/>
<rect x="99" y="105" width="3" height="78" fill="url(#c3)"/>
<rect x="102" y="105" width="3" height="78" fill="url(#c4)"/>
<rect x="105" y="105" width="3" height="78" fill="url(#c5)"/>
<rect x="108" y="105" width="3" height="78" fill="url(#c6)"/>
<rect x="111" y="105" width="3" height="78" fill="url(#c7)"/>
<rect x="111" y="176" width="3" height="7" fill="#ffef00"/>
<rect x="114" y="105" width="3" height="78" fill="url(#c8)"/>
<rect x="114" y="176" width="3" height="7" fill="#fff300"/>
<rect x="117" y="105" width="3" height="78" fill="url(#c9)"/>
<rect x="117" y="176" width="3" height="7" fill="#fff800"/>
<rect x="120" y="105" width="3" height="78" fill="url(#c10)"/>
<rect x="120" y="176" width="3" height="7" fill="#f9ff06"/>
<rect x="123" y="105" width="3" height="78" fill="url(#c11)"/>
<rect x="123" y="176" width="3" height="7" fill="#ecff13"/>
<rect x="126" y="105" width="3" height="78" fill="url(#c12)"/>
<rect x="126" y="176" width="3" height="7" fill="#e0ff1f"/>
<rect x="129" y="105" width="3" height="78" fill="url(#c13)"/>
<rect x="129" y="176" width="3" height="7" fill="#d3ff2c"/>
<rect x="132" y="105" width="3" height="78" fill="url(#c14)"/>
<rect x="132" y="176" width="3" height="7" fill="#c7ff38"/>
<rect x="135" y="105" width="3" height="78" fill="url(#c15)"/>
<rect x="135" y="176" width="3" height="7" fill="#baff45"/>
<rect x="138" y="105" width="3" height="78" fill="url(#c16)"/>
<rect x="138" y="176" width="3" height="7" fill="#aeff51"/>
<rect x="141" y="105" width="3" height="78" fill="url(#c17)"/>
<rect x="141" y="176" width="3" height="7" fill="#97ff68"/>
<rect x="144" y="105" width="3" height="78" fill="url(#c18)"/>
<rect x="144" y="176" width="3" height="7" fill="#7cff83"/>
<rect x="147" y="105" width="3" height="78" fill="url(#c19)"/>
<rect x="147" y="176" width="3" height="7" fill="#60ff9f"/>
<rect x="150" y="105" width="3" height="78" fill="url(#c20)"/>
<rect x="150" y="176" width="3" height="7" fill="#44ffbb"/>
<rect x="153" y="105" width="3" height="78" fill="url(#c21)"/>
<rect x="153" y="176" width="3" height="7" fill="#29ffd6"/>
<rect x="156" y="105" width="3" height="78" fill="url(#c22)"/>
<rect x="156" y="176" width="3" height="7" fill="#0dfff2"/>
<rect x="159" y="105" width="3" height="78" fill="url(#c23)"/>
<rect x="159" y="176" width="3" height="7" fill="#00f1ff"/>
<rect x="162" y="105" width="3" height="78" fill="url(#c24)"/>
<rect x="162" y="176" width="3" height="7" fill="#00c9ff"/>
<rect x="165" y="105" width="3" height="78" fill="url(#c25)"/>
<rect x="165" y="176" width="3" height="7" fill="#00a2ff"/>
<rect x="168" y="105" width="3" height="78" fill="url(#c26)"/>
<rect x="168" y="176" width="3" height="7" fill="#007aff"/>
<rect x="171" y="105" width="3" height="78" fill="url(#c27)"/>
<rect x="171" y="176" width="3" height="7" fill="#0053ff"/>
<rect x="174" y="105" width="3" height="78" fill="url(#c28)"/>
<rect x="174" y="176" width="3" height="7" fill="#002bff"/>
<rect x="177" y="105" width="3" height="78" fill="url(#c29)"/>
<rect x="177" y="176" width="3" height="7" fill="#0004ff"/>
<rect x="180" y="105" width="3" height="78" fill="url(#c30)"/>
<rect x="180" y="176" width="3" height="7" fill="#0000e1"/>
<rect x="183" y="105" width="3" height="78" fill="url(#c31)"/>
<rect x="183" y="176" width="3" height="7" fill="#0000cb"/>
<rect x="186" y="105" width="3" height="78" fill="url(#c32)"/>
<rect x="186" y="176" width="3" height="7" fill="#0000b4"/>
<rect x="189" y="105" width="3" height="78" fill="url(#c33)"/>
<rect x="189" y="176" width="3" height="7" fill="#0000cb"/>
<rect x="192" y="105" width="3" height="78" fill="url(#c34)"/>
<rect x="192" y="176" width="3" height="7" fill="#0000e1"/>
<rect x="195" y="105" width="3" height="78" fill="url(#c35)"/>
<rect x="195" y="176" width="3" height="7" fill="#0004ff"/>
<rect x="198" y="105" width="3" height="78" fill="url(#c36)"/>
<rect x="198" y="176" width="3" height="7" fill="#002bff"/>
<rect x="201" y="105" width="3" height="78" fill="url(#c37)"/>
<rect x="201" y="176" width="3" height="7" fill="#0053ff"/>
<rect x="204" y="105" width="3" height="78" fill="url(#c38)"/>
<rect x="204" y="176" width="3" height="7" fill="#007aff"/>
<rect x="207" y="105" width="3" height="78" fill="url(#c39)"/>
<rect x="207" y="176" width="3" height="7" fill="#00a2ff"/>
<rect x="210" y="105" width="3" height="78" fill="url(#c40)"/>
<rect x="210" y="176" width="3" height="7" fill="#00c9ff"/>
<rect x="213" y="105" width="3" height="78" fill="url(#c41)"/>
<rect x="213" y="176" width="3" height="7" fill="#00f1ff"/>
<rect x="216" y="105" width="3" height="78" fill="url(#c42)"/>
<rect x="216" y="176" width="3" height="7" fill="#0dfff2"/>
<rect x="219" y="105" width="3" height="78" fill="url(#c43)"/>
<rect x="219" y="176" width="3" height="7" fill="#29ffd6"/>
<rect x="222" y="105" width="3" height="78" fill="url(#c44)"/>
<rect x="222" y="176" width="3" height="7" fill="#44ffbb"/>
<rect x="225" y="105" width="3" height="78" fill="url(#c45)"/>
<rect x="225" y="176" width="3" height="7" fill="#60ff9f"/>
<rect x="228" y="105" width="3" height="78" fill="url(#c46)"/>
<rect x="228" y="176" width="3" height="7" fill="#7cff83"/>
<rect x="231" y="105" width="3" height="78" fill="url(#c47)"/>
<rect x="231" y="176" width="3" height="7" fill="#97ff68"/>
<rect x="234" y="105" width="3" height="78" fill="url(#c48)"/>
<rect x="234" y="176" width="3" height="7" fill="#aeff51"/>
<rect x="237" y="105" width="3" height="78" fill="url(#c49)"/>
<rect x="237" y="176" width="3" height="7" fill="#baff45"/>
<rect x="240" y="105" width="3" height="78" fill="url(#c50)"/>
<rect x="240" y="176" width="3" height="7" fill="#c7ff38"/>
<rect x="243" y="105" width="3" height="78" fill="url(#c51)"/>
<rect x="243" y="176" width="3" height="7" fill="#d3ff2c"/>
<rect x="246" y="105" width="3" height="78" fill="url(#c52)"/>
<rect x="246" y="176" width="3" height="7" fill="#e0ff1f"/>
<rect x="249" y="105" width="3" height="78" fill="url(#c53)"/>
<rect x="249" y="176" width="3" height="7" fill="#ecff13"/>
<rect x="252" y="105" width="3" height="78" fill="url(#c54)"/>
<rect x="252" y="176" width="3" height="7" fill="#f9ff06"/>
<rect x="255" y="105" width="3" height="78" fill="url(#c55)"/>
<rect x="255" y="176" width="3" height="7" fill="#fff800"/>
<rect x="258" y="105" width="3" height="78" fill="url(#c56)"/>
<rect x="258" y="176" width="3" height="7" fill="#fff300"/>
<rect x="261" y="105" width="3" height="78" fill="url(#c57)"/>
<rect x="261" y="176" width="3" height="7" fill="#ffef00"/>
<rect x="264" y="105" width="3" height="78" fill="url(#c58)"/>
<rect x="267" y="105" width="3" height="78" fill="url(#c59)"/>
<rect x="270" y="105" width="3" height="78" fill="url(#c60)"/>
<rect x="273" y="105" width="3" height="78" fill="url(#c61)"/>
<rect x="276" y="105" width="3" height="78" fill="url(#c62)"/>
<rect x="279" y="105" width="3" height="78" fill="url(#c63)"/>
<rect x="282" y="105" width="3" height="78" fill="url(#c64)"/>
<rect x="285" y="105" width="3" height="78" fill="url(#c65)"/>
<rect x="288" y="105" width="3" height="78" fill="url(#c66)"/>
<rect x="291" y="105" width="3" height="78" fill="url(#c67)"/>
<rect x="294" y="105" width="3" height="78" fill="url(#c68)"/>
<rect x="297" y="105" width="3" height="78" fill="url(#c69)"/>
<rect x="300" y="105" width="3" height="78" fill="url(#c70)"/>
<rect x="303" y="105" width="3" height="78" fill="url(#c71)"/>
<rect x="306" y="105" width="3" height="78" fill="url(#c72)"/>
<rect x="306" y="176" width="3" height="7" fill="#ffed00"/>
<rect x="309" y="105" width="3" height="78" fill="url(#c73)"/>
<rect x="309" y="176" width="3" height="7" fill="#fff200"/>
<rect x="312" y="105" width="3" height="78" fill="url(#c74)"/>
<rect x="312" y="176" width="3" height="7" fill="#fff700"/>
<rect x="315" y="105" width="3" height="78" fill="url(#c75)"/>
<rect x="315" y="176" width="3" height="7" fill="#fdff02"/>
<rect x="318" y="105" width="3" height="78" fill="url(#c76)"/>
<rect x="318" y="176" width="3" height="7" fill="#f1ff0e"/>
<rect x="321" y="105" width="3" height="78" fill="url(#c77)"/>
<rect x="321" y="176" width="3" height="7" fill="#e4ff1b"/>
<rect x="324" y="105" width="3" height="78" fill="url(#c78)"/>
<rect x="324" y="176" width="3" height="7" fill="#d8ff27"/>
<rect x="327" y="105" width="3" height="78" fill="url(#c79)"/>
<rect x="327" y="176" width="3" height="7" fill="#cbff34"/>
<rect x="330" y="105" width="3" height="78" fill="url(#c80)"/>
<rect x="330" y="176" width="3" height="7" fill="#beff41"/>
<rect x="333" y="105" width="3" height="78" fill="url(#c81)"/>
<rect x="333" y="176" width="3" height="7" fill="#b2ff4d"/>
<rect x="336" y="105" width="3" height="78" fill="url(#c82)"/>
<rect x="336" y="176" width="3" height="7" fill="#a0ff5f"/>
<rect x="339" y="105" width="3" height="78" fill="url(#c83)"/>
<rect x="339" y="176" width="3" height="7" fill="#85ff7a"/>
<rect x="342" y="105" width="3" height="78" fill="url(#c84)"/>
<rect x="342" y="176" width="3" height="7" fill="#69ff96"/>
<rect x="345" y="105" width="3" height="78" fill="url(#c85)"/>
<rect x="345" y="176" width="3" height="7" fill="#4effb1"/>
<rect x="348" y="105" width="3" height="78" fill="url(#c86)"/>
<rect x="348" y="176" width="3" height="7" fill="#32ffcd"/>
<rect x="351" y="105" width="3" height="78" fill="url(#c87)"/>
<rect x="351" y="176" width="3" height="7" fill="#16ffe9"/>
<rect x="354" y="105" width="3" height="78" fill="url(#c88)"/>
<rect x="354" y="176" width="3" height="7" fill="#00faff"/>
<rect x="357" y="105" width="3" height="78" fill="url(#c89)"/>
<rect x="357" y="176" width="3" height="7" fill="#00d6ff"/>
<rect x="360" y="105" width="3" height="78" fill="url(#c90)"/>
<rect x="360" y="176" width="3" height="7" fill="#00afff"/>
<rect x="363" y="105" width="3" height="78" fill="url(#c91)"/>
<rect x="363" y="176" width="3" height="7" fill="#0087ff"/>
<rect x="366" y="105" width="3" height="78" fill="url(#c92)"/>
<rect x="366" y="176" width="3" height="7" fill="#0060ff"/>
<rect x="369" y="105" width="3" height="78" fill="url(#c93)"/>
<rect x="369" y="176" width="3" height="7" fill="#0039ff"/>
<rect x="372" y="105" width="3" height="78" fill="url(#c94)"/>
<rect x="372" y="176" width="3" height="7" fill="#0011ff"/>
<rect x="375" y="105" width="3" height="78" fill="url(#c95)"/>
<rect x="375" y="176" width="3" height="7" fill="#0000e9"/>
<rect x="378" y="105" width="3" height="78" fill="url(#c96)"/>
<rect x="378" y="176" width="3" height="7" fill="#0000d2"/>
<rect x="381" y="105" width="3" height="78" fill="url(#c97)"/>
<rect x="381" y="176" width="3" height="7" fill="#0000bc"/>
<rect x="384" y="105" width="3" height="78" fill="url(#c98)"/>
<rect x="384" y="176" width="3" height="7" fill="#0000c7"/>
<rect x="387" y="105" width="3" height="78" fill="url(#c99)"/>
<rect x="387" y="176" width="3" height="7" fill="#0000dd"/>
<rect x="390" y="105" width="3" height="78" fill="url(#c100)"/>
<rect x="390" y="176" width="3" height="7" fill="#0000fc"/>
<rect x="393" y="105" width="3" height="78" fill="url(#c101)"/>
<rect x="393" y="176" width="3" height="7" fill="#0025ff"/>
<rect x="396" y="105" width="3" height="78" fill="url(#c102)"/>
<rect x="396" y="176" width="3" height="7" fill="#004cff"/>
<rect x="399" y="105" width="3" height="78" fill="url(#c103)"/>
<rect x="399" y="176" width="3" height="7" fill="#0074ff"/>
<rect x="402" y="105" width="3" height="78" fill="url(#c104)"/>
<rect x="402" y="176" width="3" height="7" fill="#009bff"/>
<rect x="405" y="105" width="3" height="78" fill="url(#c105)"/>
<rect x="405" y="176" width="3" height="7" fill="#00c3ff"/>
<rect x="408" y="105" width="3" height="78" fill="url(#c106)"/>
<rect x="408" y="176" width="3" height="7" fill="#00eaff"/>
<rect x="411" y="105" width="3" height="78" fill="url(#c107)"/>
<rect x="411" y="176" width="3" height="7" fill="#09fff6"/>
<rect x="414" y="105" width="3" height="78" fill="url(#c108)"/>
<rect x="414" y="176" width="3" height="7" fill="#24ffdb"/>
<rect x="417" y="105" width="3" height="78" fill="url(#c109)"/>
<rect x="417" y="176" width="3" height="7" fill="#40ffbf"/>
<rect x="420" y="105" width="3" height="78" fill="url(#c110)"/>
<rect x="420" y="176" width="3" height="7" fill="#5bffa4"/>
<rect x="423" y="105" width="3" height="78" fill="url(#c111)"/>
<rect x="423" y="176" width="3" height="7" fill="#77ff88"/>
<rect x="426" y="105" width="3" height="78" fill="url(#c112)"/>
<rect x="426" y="176" width="3" height="7" fill="#93ff6c"/>
<rect x="429" y="105" width="3" height="78" fill="url(#c113)"/>
<rect x="429" y="176" width="3" height="7" fill="#acff53"/>
<rect x="432" y="105" width="3" height="78" fill="url(#c114)"/>
<rect x="432" y="176" width="3" height="7" fill="#b8ff47"/>
<rect x="435" y="105" width="3" height="78" fill="url(#c115)"/>
<rect x="435" y="176" width="3" height="7" fill="#c5ff3a"/>
<rect x="438" y="105" width="3" height="78" fill="url(#c116)"/>
<rect x="438" y="176" width="3" height="7" fill="#d1ff2e"/>
<rect x="441" y="105" width="3" height="78" fill="url(#c117)"/>
<rect x="441" y="176" width="3" height="7" fill="#deff21"/>
<rect x="444" y="105" width="3" height="78" fill="url(#c118)"/>
<rect x="444" y="176" width="3" height="7" fill="#eaff15"/>
<rect x="447" y="105" width="3" height="78" fill="url(#c119)"/>
<rect x="447" y="176" width="3" height="7" fill="#f7ff08"/>
<rect x="450" y="105" width="3" height="78" fill="url(#c120)"/>
<rect x="450" y="176" width="3" height="7" fill="#fffb00"/>
<rect x="453" y="105" width="3" height="78" fill="url(#c121)"/>
<rect x="453" y="176" width="3" height="7" fill="#fff400"/>
<rect x="456" y="105" width="3" height="78" fill="url(#c122)"/>
<rect x="456" y="176" width="3" height="7" fill="#ffef00"/>
<rect x="459" y="105" width="3" height="78" fill="url(#c123)"/>
<rect x="462" y="105" width="3" height="78" fill="url(#c124)"/>
<rect x="465" y="105" width="3" height="78" fill="url(#c125)"/>
<rect x="468" y="105" width="3" height="78" fill="url(#c126)"/>
<rect x="471" y="105" width="3" height="78" fill="url(#c127)"/>
<rect x="474" y="105" width="3" height="78" fill="url(#c128)"/>
<rect x="477" y="105" width="3" height="78" fill="url(#c129)"/>
<rect x="480" y="105" width="1" height="78" fill="url(#c130)"/>
<rect x="114" y="168" width="147" height="8" fill="#00008c"/>
<rect x="310" y="168" width="147" height="8" fill="#00008c"/>
<rect x="107" y="168" width="3" height="9" fill="#8fff70"/>
<rect x="110" y="167" width="4" height="9" fill="#00f1ff"/>
<rect x="110" y="166" width="4" height="2" fill="#f8ff07"/>
<rect x="107" y="175" width="3" height="2" fill="#ff3000"/>
<rect x="111" y="176" width="4" height="2" fill="#900000"/>
<rect x="115" y="176" width="6" height="3" fill="#ff9000" opacity="0.35"/>
<rect x="265" y="168" width="3" height="9" fill="#8fff70"/>
<rect x="261" y="167" width="4" height="9" fill="#00f1ff"/>
<rect x="261" y="166" width="4" height="2" fill="#f8ff07"/>
<rect x="265" y="175" width="3" height="2" fill="#ff3000"/>
<rect x="259" y="176" width="4" height="2" fill="#900000"/>
<rect x="253" y="176" width="6" height="3" fill="#ff9000" opacity="0.35"/>
<rect x="303" y="168" width="3" height="9" fill="#8fff70"/>
<rect x="306" y="167" width="4" height="9" fill="#00f1ff"/>
<rect x="306" y="166" width="4" height="2" fill="#f8ff07"/>
<rect x="303" y="175" width="3" height="2" fill="#ff3000"/>
<rect x="307" y="176" width="4" height="2" fill="#900000"/>
<rect x="311" y="176" width="6" height="3" fill="#ff9000" opacity="0.35"/>
<rect x="460" y="168" width="3" height="9" fill="#8fff70"/>
<rect x="457" y="167" width="3" height="9" fill="#00f1ff"/>
<rect x="457" y="166" width="3" height="2" fill="#f8ff07"/>
<rect x="460" y="175" width="3" height="2" fill="#ff3000"/>
<rect x="455" y="176" width="4" height="2" fill="#900000"/>
<rect x="449" y="176" width="6" height="3" fill="#ff9000" opacity="0.35"/>
<defs><linearGradient id="cb" x1="0" y1="0" x2="0" y2="1"><stop offset="0.000" stop-color="#800000"/><stop offset="0.031" stop-color="#9f0000"/><stop offset="0.062" stop-color="#bf0000"/><stop offset="0.094" stop-color="#df0000"/><stop offset="0.125" stop-color="#ff0000"/><stop offset="0.156" stop-color="#ff2000"/><stop offset="0.188" stop-color="#ff4000"/><stop offset="0.219" stop-color="#ff6000"/><stop offset="0.250" stop-color="#ff8000"/><stop offset="0.281" stop-color="#ff9f00"/><stop offset="0.312" stop-color="#ffbf00"/><stop offset="0.344" stop-color="#ffdf00"/><stop offset="0.375" stop-color="#ffff00"/><stop offset="0.406" stop-color="#dfff20"/><stop offset="0.438" stop-color="#bfff40"/><stop offset="0.469" stop-color="#9fff60"/><stop offset="0.500" stop-color="#80ff80"/><stop offset="0.531" stop-color="#60ff9f"/><stop offset="0.562" stop-color="#40ffbf"/><stop offset="0.594" stop-color="#20ffdf"/><stop offset="0.625" stop-color="#00ffff"/><stop offset="0.656" stop-color="#00dfff"/><stop offset="0.688" stop-color="#00bfff"/><stop offset="0.719" stop-color="#009fff"/><stop offset="0.750" stop-color="#0080ff"/><stop offset="0.781" stop-color="#0060ff"/><stop offset="0.812" stop-color="#0040ff"/><stop offset="0.844" stop-color="#0020ff"/><stop offset="0.875" stop-color="#0000ff"/><stop offset="0.906" stop-color="#0000df"/><stop offset="0.938" stop-color="#0000bf"/><stop offset="0.969" stop-color="#00009f"/><stop offset="1.000" stop-color="#000080"/></linearGradient></defs><rect x="491" y="80" width="10" height="254" fill="url(#cb)"/>
 <g fill="#000">
  <rect x="89" y="57" width="1" height="288"/>
  <polygon points="89.5,51 85,65 95,65"/>
  <rect x="89" y="343" width="395" height="1"/>
  <polygon points="499,343.5 486,339 486,348"/>
  <!-- y ticks -->
  <rect x="90" y="109" width="8" height="1"/>
  <rect x="90" y="187" width="8" height="1"/>
  <rect x="90" y="265" width="8" height="1"/>
  <rect x="90" y="69" width="4" height="1"/>
  <rect x="90" y="148" width="4" height="1"/>
  <rect x="90" y="226" width="4" height="1"/>
  <rect x="90" y="304" width="4" height="1"/>
  <!-- x ticks -->
  <rect x="155" y="336" width="1" height="7"/>
  <rect x="220" y="336" width="1" height="7"/>
  <rect x="285" y="336" width="1" height="7"/>
  <rect x="350" y="336" width="1" height="7"/>
  <rect x="415" y="336" width="1" height="7"/>
  <rect x="480" y="336" width="1" height="7"/>
  <!-- colorbar ticks -->
  <rect x="491" y="105" width="14" height="1"/>
  <rect x="491" y="137" width="14" height="1"/>
  <rect x="491" y="170" width="14" height="1"/>
  <rect x="491" y="203" width="14" height="1"/>
  <rect x="491" y="235" width="14" height="1"/>
  <rect x="491" y="268" width="14" height="1"/>
  <rect x="491" y="301" width="14" height="1"/>
  <rect x="491" y="333" width="14" height="1"/>
 </g>
 <g font-size="12" fill="#000">
  <g text-anchor="end" font-size="12.5">
   <text x="86.5" y="113.5">500</text>
   <text x="86.5" y="191.5">300</text>
   <text x="86.5" y="269.5">100</text>
   <text x="86.5" y="348">-100</text>
  </g>
  <g text-anchor="middle" font-size="12.5">
   <text x="90.5" y="357">-300</text>
   <text x="155.3" y="357">-200</text>
   <text x="220.2" y="357">-100</text>
   <text x="285.4" y="357">0</text>
   <text x="350.6" y="357">100</text>
   <text x="415.6" y="357">200</text>
   <text x="480.6" y="357">300</text>
  </g>
  <g>
   <text x="506" y="109">35</text>
   <text x="506" y="141.5">30</text>
   <text x="506" y="174.5">25</text>
   <text x="506" y="207.5">20</text>
   <text x="506" y="239.5">15</text>
   <text x="506" y="272.5">10</text>
   <text x="506" y="305.5">5</text>
   <text x="506" y="338">0</text>
  </g>
  <text x="286" y="372" font-size="15" text-anchor="middle">x(nm)</text>
  <text transform="translate(35.5,206) rotate(-90)" font-size="15" text-anchor="middle">z(nm)</text>
 </g>
</svg>

<!-- right panel -->
<div class="gb" style="left:587px;top:14px;width:201px;height:93px"></div>
<div class="mono" style="left:594px;top:8px"><span class="gt">Plot types</span></div>
<div class="radio" style="left:597px;top:33px"></div>
<div class="mono" style="left:615px;top:34px">Line</div>
<div class="radio" style="left:597px;top:59px"></div>
<div class="a" style="left:600px;top:62px;width:7px;height:7px;border-radius:50%;background:#222"></div>
<div class="mono" style="left:615px;top:60px">Surface</div>
<div class="radio" style="left:597px;top:83px"></div>
<div class="mono" style="left:615px;top:84px">Vector</div>
<div class="btn" style="left:668px;top:30px;width:110px;height:20px"></div>
<div class="mono" style="left:671px;top:34px">xy plot</div>
<svg width="797" height="100"><polygon points="764.5,38 772.5,38 768.5,42.5" fill="#000"/></svg>
<div class="btn" style="left:668px;top:56px;width:110px;height:20px;background:#cccccc;border-color:#bfbfbf"></div>
<div class="mono" style="left:671px;top:60px;color:#838383">xyz plot</div>
<svg width="797" height="100"><polygon points="764.5,64 772.5,64 768.5,68.5" fill="#a0a0a0"/><path d="M768.5 69l4.5-5" stroke="#fff" stroke-width="1"/></svg>

<div class="gb" style="left:587px;top:120px;width:201px;height:92px"></div>
<div class="mono" style="left:594px;top:114px"><span class="gt">Plot data redraw options</span></div>
<div class="chk" style="left:597px;top:137px"></div>
<div class="mono" style="left:614px;top:138px">Hold plot settings</div>
<div class="chk" style="left:597px;top:159px"></div>
<svg width="797" height="400"><path d="M598.7 165.8l3.3 3.2 6-6.7" fill="none" stroke="#4a4a4a" stroke-width="1.5"/></svg>
<div class="mono" style="left:614px;top:160px">Auto redraw</div>
<div class="btn" style="left:598px;top:181px;width:179px;height:21px"></div>
<div class="mono" style="left:597px;top:186px;width:179px;text-align:center">Redraw</div>

<div class="gb" style="left:587px;top:219px;width:201px;height:71px"></div>
<div class="btn" style="left:598px;top:230px;width:179px;height:21px"></div>
<div class="mono" style="left:598px;top:234px;width:163px;text-align:center">Export to...</div>
<svg width="797" height="400"><polygon points="764.5,238 772.5,238 768.5,242.5" fill="#000"/></svg>
<div class="btn" style="left:598px;top:259px;width:179px;height:21px"></div>
<div class="mono" style="left:597px;top:264px;width:179px;text-align:center">Plot in New Window</div>

<div class="gb" style="left:587px;top:303px;width:201px;height:63px"></div>
<div class="mono" style="left:594px;top:297px"><span class="gt">View options</span></div>
<div class="chk" style="left:597px;top:320px"></div>
<div class="mono" style="left:614px;top:321px">Attributes</div>
<div class="chk" style="left:597px;top:342px"></div>
<div class="mono" style="left:614px;top:343px">Parameters</div>
<svg width="797" height="400"><path d="M598.7 326.8l3.3 3.2 6-6.7M598.7 348.8l3.3 3.2 6-6.7" fill="none" stroke="#4a4a4a" stroke-width="1.5"/></svg>

<!-- attributes -->
<div class="gb" style="left:10px;top:405px;width:778px;height:116px"></div>
<div class="mono" style="left:17px;top:399px"><span class="gt" style="padding:0 3px 0 4px">Attributes</span></div>
<div class="a" style="left:20px;top:421px;width:657px;height:91px;border:1px solid #828790;background:#fff;overflow:hidden">
 <div class="a" style="left:0;top:0;width:4px;height:54px;background:#bcdcf4"></div>
 <div class="a" style="left:0;top:54px;width:4px;height:19px;background:#f0f0f0"></div>
 <div class="a" style="left:4px;top:0;width:652px;height:25px;background:#bcdcf4"></div>
 <div class="a" style="left:4px;top:25px;width:652px;height:29px;background:#3399ff"></div>
 <div class="a" style="left:163px;top:25px;width:1px;height:29px;background:#d9ecfe"></div>
 <div class="a" style="left:323px;top:25px;width:1px;height:29px;background:#d9ecfe"></div>
 <div class="a" style="left:408px;top:25px;width:1px;height:29px;background:#d9ecfe"></div>
 <div class="a" style="left:493px;top:25px;width:1px;height:29px;background:#d9ecfe"></div>
 <div class="a" style="left:579px;top:25px;width:1px;height:29px;background:#d9ecfe"></div>
 <!-- header texts -->
 <div class="hb" style="left:4px;top:6px;width:160px;text-align:center">Data set</div>
 <div class="hb" style="left:164px;top:6px;width:160px;text-align:center">Attribute</div>
 <div class="a" style="left:328px;top:0;width:77px;height:25px;overflow:hidden"><div class="hb" style="left:-20px;top:6px;width:117px;text-align:center">Vector operation</div></div>
 <div class="a" style="left:413px;top:0;width:77px;height:25px;overflow:hidden"><div class="hb" style="left:-20px;top:6px;width:117px;text-align:center">Scalar operation</div></div>
 <div class="hb" style="left:494px;top:6px;width:86px;text-align:center">Scale</div>
 <div class="hb" style="left:587px;top:6px;width:76px;text-align:center">Legend</div>
 <!-- row -->
 <div class="s" style="left:7px;top:33px;color:#fff">monitor_1:E</div>
 <div class="s" style="left:167px;top:33px;color:#fff">E</div>
 <div class="s" style="left:327px;top:33px;color:#fff">Magnitude</div>
 <div class="s" style="left:412px;top:33px;color:#fff">Re</div>
 <div class="s" style="left:497px;top:33px;color:#fff">(1e0)</div>
 <div class="s" style="left:582px;top:33px;color:#fff">Re(E)</div>
 <!-- h scrollbar -->
 <div class="a" style="left:0;top:73px;width:656px;height:16px;background:#f0f0f0"></div>
 <div class="a" style="left:17px;top:73px;width:427px;height:15px;background:#cdcdcd"></div>
 <svg width="660" height="100"><path d="M11 78.5l-4 3.5 4 3.5M644 78.5l4 3.5-4 3.5" fill="none" stroke="#606060" stroke-width="1.6"/></svg>
</div>

<!-- attr buttons -->
<div class="gb" style="left:683px;top:421px;width:95px;height:90px"></div>
<div class="btn" style="left:694px;top:438px;width:73px;height:21px"></div>
<div class="mono" style="left:693px;top:443px;width:73px;text-align:center">Duplicate</div>
<div class="btn" style="left:694px;top:473px;width:73px;height:21px"></div>
<div class="mono" style="left:693px;top:478px;width:73px;text-align:center">Remove</div>

<!-- parameters -->
<div class="gb" style="left:10px;top:533px;width:778px;height:200px"></div>
<div class="mono" style="left:17px;top:527px"><span class="gt" style="padding:0 3px 0 4px">Parameters</span></div>
<div class="a" style="left:20px;top:549px;width:397px;height:128px;border:1px solid #828790;background:#fff;overflow:hidden">
 <div class="a" style="left:3px;top:0;width:1px;height:109px;background:#e5e5e5"></div>
 <div class="a" style="left:4px;top:25px;width:375px;height:24px;background:#f5f5f5"></div>
 <div class="a" style="left:4px;top:49px;width:375px;height:1px;background:#d8d8d8"></div>
 <div class="a" style="left:4px;top:79px;width:375px;height:1px;background:#d8d8d8"></div>
 <div class="a" style="left:0;top:80px;width:4px;height:29px;background:#bcdcf4"></div>
 <div class="a" style="left:4px;top:80px;width:375px;height:29px;background:#3399ff"></div>
 <div class="a" style="left:133px;top:0;width:1px;height:109px;background:#d8d8d8"></div>
 <div class="a" style="left:263px;top:0;width:1px;height:109px;background:#d8d8d8"></div>
 <div class="a" style="left:333px;top:0;width:1px;height:109px;background:#d8d8d8"></div>
 <div class="a" style="left:133px;top:80px;width:1px;height:29px;background:#d9ecfe"></div>
 <div class="a" style="left:263px;top:80px;width:1px;height:29px;background:#d9ecfe"></div>
 <div class="a" style="left:333px;top:80px;width:1px;height:29px;background:#d9ecfe"></div>
 <div class="hb" style="left:4px;top:6px;width:130px;text-align:center">Attribute(s)</div>
 <div class="hb" style="left:134px;top:6px;width:130px;text-align:center">Parameter</div>
 <div class="hb" style="left:264px;top:6px;width:70px;text-align:center">Action</div>
 <div class="a" style="left:334px;top:0;width:45px;height:25px;overflow:hidden"><div class="hb" style="left:33px;top:6px">Value</div></div>
 <div class="s" style="left:8px;top:28px">monitor_1:E (E)</div>
 <div class="s" style="left:137px;top:28px">y</div>
 <div class="s" style="left:267px;top:28px">Slice</div>
 <div class="s" style="left:337px;top:28px">0</div>
 <div class="s" style="left:8px;top:59px">monitor_1:E (E)</div>
 <div class="s" style="left:137px;top:59px">z</div>
 <div class="s" style="left:267px;top:59px">Plot y axis</div>
 <div class="a" style="left:0;top:0;width:379px;height:109px;overflow:hidden">
 <div class="s" style="left:8px;top:88px;color:#fff">monitor_1:E (E)</div>
 <div class="s" style="left:137px;top:88px;color:#fff">lambda</div>
 <div class="s" style="left:267px;top:88px;color:#fff">Slice</div>
 <div class="s" style="left:337px;top:88px;color:#fff">1450.14</div>
 </div>
 <!-- v scrollbar -->
 <div class="a" style="left:379px;top:0;width:17px;height:127px;background:#f0f0f0"></div>
 <div class="a" style="left:380px;top:40px;width:15px;height:53px;background:#cdcdcd"></div>
 <!-- h scrollbar -->
 <div class="a" style="left:0;top:110px;width:379px;height:17px;background:#f0f0f0"></div>
 <div class="a" style="left:17px;top:111px;width:299px;height:15px;background:#cdcdcd"></div>
 <svg width="400" height="130"><path d="M11 115l-4 3.5 4 3.5M367 115l4 3.5-4 3.5M384 12l3.5-3.5 3.5 3.5M384 100l3.5 3.5 3.5-3.5" fill="none" stroke="#606060" stroke-width="1.6"/></svg>
</div>

<!-- lower right -->
<div class="gb" style="left:422px;top:549px;width:356px;height:128px"></div>
<div class="a" style="left:435px;top:570px;width:330px;height:4px;background:#e7eae7;border:1px solid #d6d6d6"></div>
<div class="a" style="left:574px;top:562px;width:10px;height:21px;background:#0078d7"></div>
<div class="mono" style="left:434px;top:594px">Value</div>
<div class="a" style="left:471px;top:591px;width:236px;height:20px;border:1px solid #7a7a7a;background:#f0f0f0;box-shadow:inset 0 -1px 0 #fff, inset -1px 0 0 #fff"></div>
<div class="mono" style="left:475px;top:594px">1450.14</div>
<div class="btn" style="left:714px;top:591px;width:21px;height:20px"></div>
<div class="btn" style="left:743px;top:591px;width:21px;height:20px"></div>
<svg width="797" height="684"><polygon points="717,597 730.5,597 723.75,604" fill="#000"/><polygon points="746,604 759.5,604 752.75,597" fill="#000"/></svg>
<div class="mono" style="left:434px;top:622px">Index</div>
<div class="a" style="left:471px;top:618px;width:294px;height:20px;border:1px solid #7a7a7a;background:#f0f0f0;box-shadow:inset 0 -1px 0 #fff, inset -1px 0 0 #fff"></div>
<div class="mono" style="left:475px;top:622px">44</div>
<div class="mono" style="left:434px;top:648px">Units</div>
<div class="btn" style="left:471px;top:644px;width:103px;height:20px"></div>
<div class="mono" style="left:475px;top:648px">nano (1e-9)</div>
<div class="a" style="left:580px;top:644px;width:93px;height:20px;border:1px solid #d6d6d6;background:#fff"></div>
<div class="a" style="left:582px;top:646px;width:71px;height:16px;background:#f0f0f0"></div>
<div class="mono" style="left:586px;top:648px;color:#a8a8a8;font-size:10px;letter-spacing:0;-webkit-text-stroke:0">m</div>
<svg width="797" height="684"><polygon points="558,651 567,651 562.5,656" fill="#000"/><path d="M658 652.5l4.5 4.5 4.5-4.5" fill="none" stroke="#b0b0b0" stroke-width="1.2"/></svg>

</body></html>
